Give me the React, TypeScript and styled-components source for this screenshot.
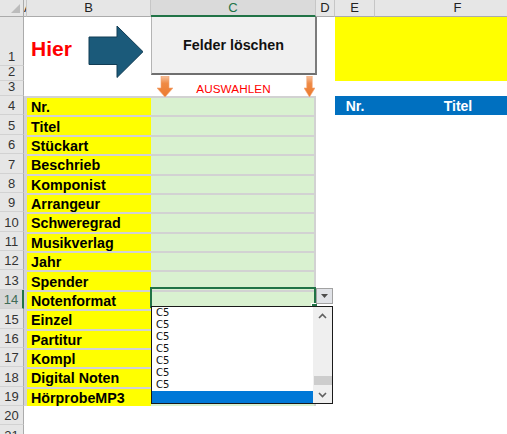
import React from 'react';
import styled, { createGlobalStyle } from 'styled-components';

const GlobalStyle = createGlobalStyle`
  html, body { margin: 0; padding: 0; background: #ffffff; overflow: hidden; }
  #root { width: 507px; height: 434px; }
  * { box-sizing: border-box; }
`;

const Viewport = styled.div`
  position: relative;
  width: 507px;
  height: 434px;
  overflow: hidden;
  background: #ffffff;
  font-family: "Liberation Sans", Arial, sans-serif;
`;

const Sheet = styled.div`
  display: grid;
  grid-template-columns: 24px 3px 124px 165px 19px 40px 166px;
  grid-template-rows: 17px 49px 15px 15px repeat(18, 19.375px);
  width: 541px;
`;

const Corner = styled.div`
  position: relative;
  background: #e6e6e6;
  border-right: 1px solid #ababab;
  border-bottom: 1px solid #ababab;
  &::after {
    content: "";
    position: absolute;
    right: 3px;
    bottom: 3px;
    width: 9px;
    height: 9px;
    background: #bcbcbc;
    clip-path: polygon(100% 0, 100% 100%, 0 100%);
  }
`;

const ColHeader = styled.div<{ $active?: boolean; $narrow?: boolean }>`
  display: flex;
  align-items: center;
  justify-content: ${p => (p.$narrow ? 'flex-start' : 'center')};
  overflow: hidden;
  white-space: nowrap;
  font-size: 13px;
  line-height: 14px;
  background: ${p => (p.$active ? '#dadada' : '#e6e6e6')};
  color: ${p => (p.$active ? '#217346' : '#222222')};
  border-right: 1px solid #c6c6c6;
  border-bottom: ${p => (p.$active ? '2px solid #217346' : '1px solid #ababab')};
  padding-top: ${p => (p.$active ? '1px' : '0')};
`;

const RowHeader = styled.div<{ $active?: boolean }>`
  display: flex;
  align-items: flex-end;
  justify-content: center;
  padding-bottom: 1px;
  font-size: 13px;
  line-height: 14px;
  background: ${p => (p.$active ? '#d6d6d6' : '#e6e6e6')};
  color: ${p => (p.$active ? '#3f6b56' : '#333333')};
  border-bottom: 1px solid #d2d2d2;
  border-right: ${p => (p.$active ? '2px solid #217346' : '1px solid #ababab')};
`;

const BlankCell = styled.div`
  background: #ffffff;
`;

const GutterCell = styled.div`
  background: #d4d4d4;
`;

const HierCell = styled.div`
  display: flex;
  align-items: flex-end;
  padding: 0 0 5px 4px;
  color: #ff0000;
  font-weight: bold;
  font-size: 21px;
  line-height: 24px;
`;

const Banner = styled.div`
  grid-column: span 2;
  grid-row: span 2;
  background: #ffff00;
`;

const HintCell = styled.div`
  display: flex;
  align-items: center;
  justify-content: center;
  color: #ff0000;
  font-size: 11.7px;
  line-height: 14px;
  letter-spacing: 0.1px;
`;

const LabelCell = styled.div`
  display: flex;
  align-items: center;
  padding: 1px 0 0 4px;
  background: #ffff00;
  border-top: 2px solid #d2d2d2;
  color: #000000;
  font-weight: bold;
  font-size: 14.3px;
  line-height: 16px;
  white-space: nowrap;
  overflow: hidden;
`;

const InputCell = styled.div`
  background: #d9f1d0;
  border-top: 2px solid #d2d2d2;
  border-right: 2px solid #d2d2d2;
`;

const TitleCell = styled.div`
  display: flex;
  align-items: center;
  justify-content: center;
  background: #0070c0;
  color: #ffffff;
  font-weight: bold;
  font-size: 14px;
  line-height: 16px;
  white-space: nowrap;
`;

const ArrowDrawing = styled.svg`
  position: absolute;
  left: 86px;
  top: 23px;
  width: 60px;
  height: 58px;
`;

const ClearButton = styled.div`
  position: absolute;
  left: 151px;
  top: 17px;
  width: 166px;
  height: 58px;
  display: flex;
  align-items: center;
  justify-content: center;
  padding-bottom: 1px;
  background: #f0f0f0;
  border-left: 1px solid #b4b4b4;
  border-right: 2px solid #7c7c7c;
  border-bottom: 2px solid #6f6f6f;
  color: #111111;
  font-weight: bold;
  font-size: 14.3px;
  line-height: 16px;
  white-space: nowrap;
`;

const DownMarker = styled.svg<{ $left: number; $w: number }>`
  position: absolute;
  top: 76px;
  left: ${p => p.$left}px;
  width: ${p => p.$w}px;
  height: 22px;
`;

const Selection = styled.div`
  position: absolute;
  left: 150px;
  top: 287px;
  width: 166px;
  height: 21px;
  border: 2px solid #217346;
  &::after {
    content: "";
    position: absolute;
    right: -4px;
    bottom: -4px;
    width: 5px;
    height: 5px;
    background: #217346;
    border: 1px solid #ffffff;
  }
`;

const DropButton = styled.div`
  position: absolute;
  left: 316px;
  top: 288px;
  width: 17px;
  height: 16px;
  display: flex;
  align-items: center;
  justify-content: center;
  background: #e1e3e8;
  border: 1px solid #a2a2a2;
  &::before {
    content: "";
    width: 7px;
    height: 4px;
    background: #4d4d4d;
    clip-path: polygon(0 0, 100% 0, 50% 100%);
  }
`;

const ListBox = styled.div`
  position: absolute;
  left: 151px;
  top: 306px;
  width: 182px;
  height: 98px;
  display: flex;
  background: #ffffff;
  border: 1px solid #1a1a1a;
`;

const ListItems = styled.div`
  flex: 1;
  display: flex;
  flex-direction: column;
`;

const ListItem = styled.div<{ $selected?: boolean }>`
  height: 12px;
  padding-left: 4px;
  font-family: "DejaVu Sans", Tahoma, sans-serif;
  font-size: 10px;
  line-height: 12px;
  color: #111111;
  background: ${p => (p.$selected ? '#0078d7' : 'transparent')};
`;

const ScrollTrack = styled.div`
  width: 19px;
  display: flex;
  flex-direction: column;
  align-items: center;
  justify-content: space-between;
  background: #efefef;
  padding: 6px 0 5px;
`;

const ScrollArrow = styled.svg`
  width: 9px;
  height: 6px;
`;

const ScrollThumb = styled.div`
  width: 18px;
  height: 9px;
  margin-top: auto;
  margin-bottom: 7px;
  background: #cdcdcd;
`;

const LABELS = [
  'Nr.', 'Titel', 'Stückart', 'Beschrieb', 'Komponist', 'Arrangeur', 'Schweregrad',
  'Musikverlag', 'Jahr', 'Spender', 'Notenformat', 'Einzel', 'Partitur', 'Kompl',
  'Digital Noten', 'HörprobeMP3',
];

const COLUMNS = ['A', 'B', 'C', 'D', 'E', 'F'];

function OrangeArrow({ left, w }: { left: number; w: number }) {
  const shaft = w * 0.5;
  const sx = (w - shaft) / 2;
  const id = `og${left}`;
  return (
    <DownMarker $left={left} $w={w} viewBox={`0 0 ${w} 22`}>
      <defs>
        <linearGradient id={id} x1="0" y1="0" x2="0" y2="1">
          <stop offset="0" stopColor="#f6c3a0" />
          <stop offset="0.35" stopColor="#ef8a45" />
          <stop offset="1" stopColor="#ec7a2e" />
        </linearGradient>
      </defs>
      <polygon
        points={`${sx},0 ${sx + shaft},0 ${sx + shaft},12 ${w},12 ${w / 2},21 0,12 ${sx},12`}
        fill={`url(#${id})`}
        stroke="#f3a673"
        strokeWidth="0.6"
      />
    </DownMarker>
  );
}

export default function App() {
  const rows: React.ReactNode[] = [];

  // header row
  rows.push(<Corner key="corner" />);
  COLUMNS.forEach(c => (
    rows.push(
      <ColHeader key={`h${c}`} $active={c === 'C'} $narrow={c === 'A'}>
        {c}
      </ColHeader>,
    )
  ));

  // row 1
  rows.push(<RowHeader key="r1">1</RowHeader>);
  rows.push(<BlankCell key="1A" />);
  rows.push(<HierCell key="1B">Hier</HierCell>);
  rows.push(<BlankCell key="1C" />);
  rows.push(<BlankCell key="1D" />);
  rows.push(<Banner key="1E" />);

  // row 2
  rows.push(<RowHeader key="r2">2</RowHeader>);
  ['A', 'B', 'C', 'D'].forEach(c => rows.push(<BlankCell key={`2${c}`} />));

  // row 3
  rows.push(<RowHeader key="r3">3</RowHeader>);
  rows.push(<BlankCell key="3A" />);
  rows.push(<BlankCell key="3B" />);
  rows.push(<HintCell key="3C">AUSWAHLEN</HintCell>);
  ['D', 'E', 'F'].forEach(c => rows.push(<BlankCell key={`3${c}`} />));

  // rows 4-19
  LABELS.forEach((label, i) => {
    const n = i + 4;
    rows.push(<RowHeader key={`r${n}`} $active={n === 14}>{n}</RowHeader>);
    rows.push(<GutterCell key={`${n}A`} />);
    rows.push(<LabelCell key={`${n}B`}>{label}</LabelCell>);
    rows.push(<InputCell key={`${n}C`} />);
    rows.push(<BlankCell key={`${n}D`} />);
    if (n === 4) {
      rows.push(<TitleCell key="4E">Nr.</TitleCell>);
      rows.push(<TitleCell key="4F">Titel</TitleCell>);
    } else {
      rows.push(<BlankCell key={`${n}E`} />);
      rows.push(<BlankCell key={`${n}F`} />);
    }
  });

  // rows 20-21
  [20, 21].forEach(n => {
    rows.push(<RowHeader key={`r${n}`}>{n}</RowHeader>);
    COLUMNS.forEach(c => rows.push(<BlankCell key={`${n}${c}`} />));
  });

  return (
    <Viewport>
      <GlobalStyle />
      <Sheet>{rows}</Sheet>

      <ArrowDrawing viewBox="0 0 60 58">
        <polygon
          points="3,14 31,14 31,3 57,28.7 31,54.5 31,41.5 3,41.5"
          fill="#1b5a7a"
          stroke="#113c54"
          strokeWidth="1"
        />
      </ArrowDrawing>

      <ClearButton>Felder löschen</ClearButton>

      <OrangeArrow left={157} w={16} />
      <OrangeArrow left={304} w={11} />

      <Selection />
      <DropButton />

      <ListBox>
        <ListItems>
          {Array.from({ length: 7 }).map((_, i) => (
            <ListItem key={i}>C5</ListItem>
          ))}
          <ListItem $selected>&nbsp;</ListItem>
        </ListItems>
        <ScrollTrack>
          <ScrollArrow viewBox="0 0 9 6">
            <polyline points="1,5 4.5,1.5 8,5" fill="none" stroke="#606060" strokeWidth="1.6" />
          </ScrollArrow>
          <ScrollThumb />
          <ScrollArrow viewBox="0 0 9 6">
            <polyline points="1,1 4.5,4.5 8,1" fill="none" stroke="#606060" strokeWidth="1.6" />
          </ScrollArrow>
        </ScrollTrack>
      </ListBox>
    </Viewport>
  );
}
